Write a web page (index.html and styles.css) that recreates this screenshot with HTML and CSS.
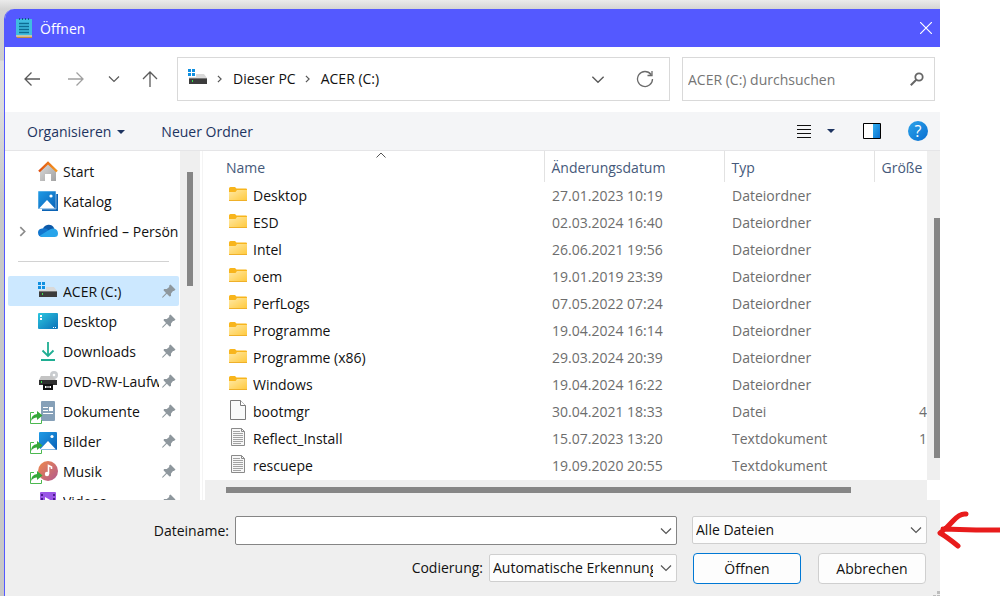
FILE: index.html
```
<!DOCTYPE html>
<html lang="de">
<head>
    <meta charset="UTF-8">
    <meta name="viewport" content="width=device-width, initial-scale=1.0">
    <title>Öffnen</title>
    <link rel="stylesheet" href="styles.css">
</head>
<body>
    <svg class="symbols" width="0" height="0" aria-hidden="true">
        <defs>
            <linearGradient id="folderFill" x1="0" y1="0" x2="1" y2="1">
                <stop offset="0" stop-color="#ffe9a6"/><stop offset="1" stop-color="#ffc93c"/>
            </linearGradient>
            <linearGradient id="blueFill" x1="0" y1="0" x2="1" y2="1">
                <stop offset="0" stop-color="#1f9be6"/><stop offset="1" stop-color="#0a62b8"/>
            </linearGradient>
            <linearGradient id="paneFill" x1="0" y1="0" x2="1" y2="1">
                <stop offset="0" stop-color="#32b0f0"/><stop offset="1" stop-color="#0a6fd0"/>
            </linearGradient>
            <linearGradient id="deskFill" x1="0" y1="0" x2="1" y2="1">
                <stop offset="0" stop-color="#2cc6df"/><stop offset="1" stop-color="#0b70b8"/>
            </linearGradient>
            <linearGradient id="musicFill" x1="0" y1="0" x2="1" y2="1">
                <stop offset="0" stop-color="#f08a4b"/><stop offset="1" stop-color="#b0588f"/>
            </linearGradient>
            <linearGradient id="roofFill" x1="0" y1="0" x2="1" y2="0">
                <stop offset="0" stop-color="#e04e0e"/><stop offset="1" stop-color="#f59a23"/>
            </linearGradient>
            <linearGradient id="wallFill" x1="0" y1="0" x2="1" y2="1">
                <stop offset="0" stop-color="#dcdcdc"/><stop offset="1" stop-color="#a2a2a2"/>
            </linearGradient>
        </defs>
        <symbol id="drive" viewBox="0 0 20 20">
            <path d="M0 1h3v3H0zM4 1h3v3H4zM0 5h3v3H0zM4 5h3v3H4z" fill="#0f8fe0"/>
            <path d="M8 6h8l3 4H1V9h7z" fill="#d9d9d9"/>
            <path d="M1 10h18v6H1z" fill="#3c3c3c"/>
            <path d="M1 10h18v1H1z" fill="#777"/>
            <path d="M4 12h1v2H4z" fill="#38e04a"/>
        </symbol>
        <symbol id="folder" viewBox="0 0 18 14">
            <path d="M0 1.500Q0 0 1.500 0H6l1.500 1.500H17q1 0 1 1V5H0z" fill="#f8b51c"/>
            <path d="M0 5h6.500L8 3h10v10.500H0z" fill="url(#folderFill)"/>
            <path d="M0 13h18v1H0z" fill="#efb029"/>
        </symbol>
        <symbol id="file" viewBox="0 0 18 20">
            <path d="M1.500.5h10l5 5v14h-15z" fill="#f9fafa" stroke="#7a7a7a"/>
            <path d="M11.500.5v5h5" fill="#fff" stroke="#7a7a7a"/>
        </symbol>
        <symbol id="text" viewBox="0 0 18 20">
            <path d="M2.500 1.500h10l3 3v14h-13z" fill="#f7f7f7" stroke="#8a8a8a"/>
            <path d="M12.500 1.500v3h3" fill="none" stroke="#8a8a8a"/>
            <path d="M4 4.500h7M4 6.500h10M4 8.500h10M4 10.500h10M4 12.500h10M4 14.500h10M4 16.500h8" stroke="#a2a2a2" fill="none"/>
        </symbol>
        <symbol id="pin" viewBox="0 0 14 14">
            <path d="M8.500 0.500L13.500 5.500L12 7L11 7L9 9.500L9 12L7.500 12.500L4.800 9.800L1 13.500L0 13.800L0.500 12.500L4 9L1.500 6.300L2 5L4.800 5L7.200 3L7.200 1.500z" fill="#8e979d"/>
        </symbol>
        <symbol id="share" viewBox="0 0 14 14">
            <path d="M5 2.500H1.500v11h11V10" fill="#fff" stroke="#4cb850"/>
            <path d="M2 11Q2 5 8 4V1l5.500 4.500L8 10V7.500Q4 7.500 2 11z" fill="#35a83a"/>
        </symbol>
        <symbol id="down" viewBox="0 0 12 8">
            <path d="M1 1.500l5 5 5-5" fill="none" stroke="currentColor" stroke-width="1.200"/>
        </symbol>
        <symbol id="right" viewBox="0 0 6 10">
            <path d="M1 1l4 4-4 4" fill="none" stroke="currentColor" stroke-width="1.500"/>
        </symbol>
    </svg>

    <div class="desktop">
        <div class="dialog">
            <header class="titlebar">
                <svg class="app-icon" width="16" height="20" viewBox="0 0 16 20" aria-hidden="true">
                    <path d="M0 17h16v3H1z" fill="#c58b3f"/>
                    <path d="M0 1h16v16.500H0z" fill="#40bde0"/>
                    <path d="M0 17.500h16v1H0z" fill="#f1e9dc"/>
                    <path d="M3 5.500h10M3 8.500h10M3 11.500h10M3 14.500h10" stroke="#0d6d94" stroke-width="1.500"/>
                    <path d="M3.500 0v2M6.500 0v2M9.500 0v2M12.500 0v2" stroke="#0d5d86"/>
                </svg>
                <h1>Öffnen</h1>
                <button class="close" type="button" aria-label="Schließen">
                    <svg width="12" height="12" viewBox="0 0 12 12"><path d="M0 0l12 12M12 0L0 12" stroke="#fff" stroke-width="1.200"/></svg>
                </button>
            </header>

            <div class="navbar">
                <button class="nav" type="button" aria-label="Zurück">
                    <svg width="16" height="16" viewBox="0 0 16 16"><path d="M16 8H1M7.500 1.500L1 8l6.500 6.500" fill="none" stroke="#5a5a5a" stroke-width="1.300"/></svg>
                </button>
                <button class="nav" type="button" aria-label="Vorwärts">
                    <svg width="16" height="16" viewBox="0 0 16 16"><path d="M0 8h15M8.500 1.500L15 8l-6.500 6.500" fill="none" stroke="#a0a0a0" stroke-width="1.300"/></svg>
                </button>
                <button class="nav narrow" type="button" aria-label="Zuletzt besucht">
                    <svg width="12" height="8"><use href="#down"/></svg>
                </button>
                <button class="nav" type="button" aria-label="Nach oben">
                    <svg width="16" height="16" viewBox="0 0 16 16"><path d="M8 16V1M1 8l7-7 7 7" fill="none" stroke="#5a5a5a" stroke-width="1.300"/></svg>
                </button>
                <div class="address">
                    <svg class="address-icon" width="20" height="20"><use href="#drive"/></svg>
                    <svg class="crumb-arrow" width="5" height="8"><use href="#right"/></svg>
                    <a href="#">Dieser PC</a>
                    <svg class="crumb-arrow" width="5" height="8"><use href="#right"/></svg>
                    <a href="#">ACER (C:)</a>
                    <button class="address-btn first" type="button" aria-label="Vorherige Orte">
                        <svg width="14" height="9"><use href="#down"/></svg>
                    </button>
                    <button class="address-btn" type="button" aria-label="Aktualisieren">
                        <svg width="18" height="18" viewBox="0 0 18 18"><path d="M15 4.500A7.500 7.500 0 1 0 16.500 9M16 1v4.500h-4.500" fill="none" stroke="#6a6a6a" stroke-width="1.300"/></svg>
                    </button>
                </div>
                <div class="search">
                    <input type="text" placeholder="ACER (C:) durchsuchen" aria-label="ACER (C:) durchsuchen">
                    <svg width="14" height="14" viewBox="0 0 14 14" aria-hidden="true"><circle cx="9" cy="5" r="3.700" fill="none" stroke="#666" stroke-width="1.800"/><path d="M6.300 7.700L.8 13.200" stroke="#666" stroke-width="2"/></svg>
                </div>
            </div>

            <div class="commands">
                <button class="command" type="button">Organisieren
                    <svg width="8" height="4" viewBox="0 0 8 4"><path d="M0 0h8L4 4z" fill="#1d3461"/></svg>
                </button>
                <button class="command" type="button">Neuer Ordner</button>
                <div class="view-tools">
                    <button type="button" aria-label="Ansicht ändern">
                        <svg width="14" height="14" viewBox="0 0 14 14"><path d="M0 1.500h14M0 5.500h14M0 9.500h14M0 13.500h14" stroke="#111"/></svg>
                    </button>
                    <button class="view-menu" type="button" aria-label="Weitere Optionen">
                        <svg width="8" height="4" viewBox="0 0 8 4"><path d="M0 0h8L4 4z" fill="#1d3461"/></svg>
                    </button>
                    <button class="preview" type="button" aria-label="Vorschaufenster">
                        <svg width="18" height="16" viewBox="0 0 18 16"><path d="M.5.500h17v15H.5z" fill="#fff" stroke="#000"/><path d="M10 1h7v14h-7z" fill="url(#paneFill)"/></svg>
                    </button>
                    <button class="help" type="button" aria-label="Hilfe">?</button>
                </div>
            </div>

            <div class="content">
                <nav class="sidebar">
                    <ul>
                        <li><a href="#">
                            <span class="place-icon"><svg width="20" height="20" viewBox="0 0 20 20">
                                <path d="M2 9l8-7 8 7v11h-5v-7H7v7H2z" fill="url(#wallFill)"/>
                                <path d="M1 10.500L10 2l9 8.500" fill="none" stroke="url(#roofFill)" stroke-width="2.400"/>
                            </svg></span>
                            <span class="place">Start</span></a></li>
                        <li><a href="#">
                            <span class="place-icon"><svg width="20" height="20" viewBox="0 0 20 20">
                                <path d="M4 3h16v17H4z" fill="#0b63b5"/>
                                <path d="M0 0h18v18H0z" fill="url(#blueFill)" stroke="#fff" stroke-width=".5"/>
                                <path d="M1 17.500L9 9l8 8.500z" fill="#fff"/><circle cx="13" cy="5" r="1.600" fill="#fff"/>
                            </svg></span>
                            <span class="place">Katalog</span></a></li>
                        <li><a href="#">
                            <svg class="expand" width="7" height="11"><use href="#right"/></svg>
                            <span class="place-icon"><svg width="20" height="20" viewBox="0 0 20 20">
                                <path d="M5 8a6 6 0 0 1 11-1l1 4-12 1z" fill="#0c59a8"/>
                                <path d="M4 7.500q4-1 7 2L5 16q-5 0-5-4.500Q0 8 4 7.500z" fill="#1276ce"/>
                                <path d="M2 14.500L11 9q2-2 5-1.500 4 1 4 5Q20 16 16.500 16H5q-2 0-3-1.500z" fill="#28a4ea"/>
                            </svg></span>
                            <span class="place">Winfried – Persön</span></a></li>
                    </ul>
                    <hr>
                    <ul>
                        <li><a class="active" href="#">
                            <span class="place-icon"><svg width="20" height="20"><use href="#drive"/></svg></span>
                            <span class="place">ACER (C:)</span><svg class="pin" width="14" height="14"><use href="#pin"/></svg></a></li>
                        <li><a href="#">
                            <span class="place-icon"><svg width="20" height="20" viewBox="0 0 20 20">
                                <rect y="2" width="20" height="16" rx="1" fill="url(#deskFill)"/>
                                <path d="M2 4h2v2H2zM2 7h2v2H2zM15 16h1v1h-1zM17 16h1v1h-1z" fill="#fff"/>
                            </svg></span>
                            <span class="place">Desktop</span><svg class="pin" width="14" height="14"><use href="#pin"/></svg></a></li>
                        <li><a href="#">
                            <span class="place-icon"><svg width="20" height="20" viewBox="0 0 20 20">
                                <path d="M10 1v14M4.500 9.500L10 15l5.500-5.500M3 19h14" fill="none" stroke="#1fae92" stroke-width="1.800"/>
                            </svg></span>
                            <span class="place">Downloads</span><svg class="pin" width="14" height="14"><use href="#pin"/></svg></a></li>
                        <li><a href="#">
                            <span class="place-icon"><svg width="20" height="20" viewBox="0 0 20 20">
                                <circle cx="16" cy="4" r="4" fill="#c9cccf"/><circle cx="16" cy="4" r="1.300" fill="#fff"/>
                                <path d="M3 5h11l4 4H1z" fill="#c4c4c4"/><path d="M1 9h18v5H1z" fill="#303030"/>
                                <path d="M3 10h1v2H3z" fill="#3be04c"/><path d="M5 13h10v6H5z" fill="#111"/>
                                <path d="M7 15h6v2H7z" fill="#fff"/><path d="M8 16h4" stroke="#222"/>
                            </svg></span>
                            <span class="place">DVD-RW-Laufwerk</span><svg class="pin" width="14" height="14"><use href="#pin"/></svg></a></li>
                        <li><a href="#">
                            <span class="place-icon"><svg width="20" height="20" viewBox="0 0 20 20">
                                <rect x="3" width="14" height="20" rx="1" fill="#86a0b8"/>
                                <path d="M5 6.500h5M5 9.500h5M5 12.500h10" stroke="#fff"/><path d="M11 6h4v4h-4z" fill="#fff"/>
                            </svg><svg class="badge" width="14" height="14"><use href="#share"/></svg></span>
                            <span class="place">Dokumente</span><svg class="pin" width="14" height="14"><use href="#pin"/></svg></a></li>
                        <li><a href="#">
                            <span class="place-icon"><svg width="20" height="20" viewBox="0 0 20 20">
                                <rect x="1" y="1" width="18" height="18" rx="1" fill="url(#blueFill)"/>
                                <path d="M2 18.500L10 10l8 8.500z" fill="#fff"/><circle cx="14" cy="5.500" r="1.600" fill="#fff"/>
                            </svg><svg class="badge" width="14" height="14"><use href="#share"/></svg></span>
                            <span class="place">Bilder</span><svg class="pin" width="14" height="14"><use href="#pin"/></svg></a></li>
                        <li><a href="#">
                            <span class="place-icon"><svg width="20" height="20" viewBox="0 0 20 20">
                                <circle cx="10" cy="10" r="10" fill="url(#musicFill)"/>
                                <path d="M10.500 13V4.500l3 1.500v2" fill="none" stroke="#fff" stroke-width="1.600"/><circle cx="9" cy="13" r="2.200" fill="#fff"/>
                            </svg><svg class="badge" width="14" height="14"><use href="#share"/></svg></span>
                            <span class="place">Musik</span><svg class="pin" width="14" height="14"><use href="#pin"/></svg></a></li>
                        <li><a href="#">
                            <span class="place-icon"><svg width="20" height="20" viewBox="0 0 20 20">
                                <rect x="2" y="1" width="16" height="18" rx="1" fill="#9a55e6"/>
                                <path d="M3 3h2v2H3zM3 7h2v2H3zM15 3h2v2h-2zM15 7h2v2h-2z" fill="#4b1d8e"/>
                                <path d="M7 6l7 4-7 4z" fill="#fff"/>
                            </svg></span>
                            <span class="place">Videos</span><svg class="pin" width="14" height="14"><use href="#pin"/></svg></a></li>
                    </ul>
                </nav>
                <div class="scroll-side"><div class="thumb"></div></div>

                <div class="files">
                    <div class="list">
                        <table>
                            <colgroup><col><col class="col-date"><col class="col-type"><col class="col-size"></colgroup>
                            <thead>
                                <tr>
                                    <th>Name <svg class="sort" width="10" height="6" viewBox="0 0 10 6"><path d="M.5 5.500L5 1l4.500 4.500" fill="none" stroke="#555"/></svg></th>
                                    <th>Änderungsdatum</th><th>Typ</th><th>Größe</th>
                                </tr>
                            </thead>
                            <tbody>
                                <tr><td><svg width="18" height="14"><use href="#folder"/></svg>Desktop</td><td>27.01.2023 10:19</td><td>Dateiordner</td><td></td></tr>
                                <tr><td><svg width="18" height="14"><use href="#folder"/></svg>ESD</td><td>02.03.2024 16:40</td><td>Dateiordner</td><td></td></tr>
                                <tr><td><svg width="18" height="14"><use href="#folder"/></svg>Intel</td><td>26.06.2021 19:56</td><td>Dateiordner</td><td></td></tr>
                                <tr><td><svg width="18" height="14"><use href="#folder"/></svg>oem</td><td>19.01.2019 23:39</td><td>Dateiordner</td><td></td></tr>
                                <tr><td><svg width="18" height="14"><use href="#folder"/></svg>PerfLogs</td><td>07.05.2022 07:24</td><td>Dateiordner</td><td></td></tr>
                                <tr><td><svg width="18" height="14"><use href="#folder"/></svg>Programme</td><td>19.04.2024 16:14</td><td>Dateiordner</td><td></td></tr>
                                <tr><td><svg width="18" height="14"><use href="#folder"/></svg>Programme (x86)</td><td>29.03.2024 20:39</td><td>Dateiordner</td><td></td></tr>
                                <tr><td><svg width="18" height="14"><use href="#folder"/></svg>Windows</td><td>19.04.2024 16:22</td><td>Dateiordner</td><td></td></tr>
                                <tr><td><svg width="18" height="20"><use href="#file"/></svg>bootmgr</td><td>30.04.2021 18:33</td><td>Datei</td><td>4</td></tr>
                                <tr><td><svg width="18" height="20"><use href="#text"/></svg>Reflect_Install</td><td>15.07.2023 13:20</td><td>Textdokument</td><td>1</td></tr>
                                <tr><td><svg width="18" height="20"><use href="#text"/></svg>rescuepe</td><td>19.09.2020 20:55</td><td>Textdokument</td><td></td></tr>
                            </tbody>
                        </table>
                    </div>
                    <div class="scroll-y"><div class="thumb"></div></div>
                    <div class="scroll-x"><div class="thumb"></div></div>
                </div>
            </div>

            <form class="footer">
                <label class="name-label" for="filename">Dateiname:</label>
                <div class="combo">
                    <input id="filename" type="text">
                    <button type="button" aria-label="Zuletzt verwendet"><svg width="12" height="8"><use href="#down"/></svg></button>
                </div>
                <div class="select">
                    <select aria-label="Dateityp"><option>Alle Dateien</option></select>
                    <svg width="12" height="8"><use href="#down"/></svg>
                </div>
                <div class="encoding">
                    <label for="encoding">Codierung:</label>
                    <div class="select">
                        <select id="encoding"><option>Automatische Erkennung</option></select>
                        <svg width="12" height="8"><use href="#down"/></svg>
                    </div>
                </div>
                <div class="buttons">
                    <button class="btn primary" type="button">Öffnen</button>
                    <button class="btn" type="button">Abbrechen</button>
                </div>
                <svg class="grip" width="7" height="5" viewBox="0 0 7 5" aria-hidden="true"><path d="M4 0h3v3H4zM0 4h3v1H0zM4 4h3v1H4z" fill="#bdbdbd"/></svg>
            </form>
        </div>
    </div>

    <svg class="arrow" width="64" height="42" viewBox="0 0 64 42" aria-hidden="true">
        <path d="M64 20L40 20L7 19M30 4Q24 3 17 11Q11 18 4 23Q11 27 22 36" fill="none" stroke="#e81c1c" stroke-width="5" stroke-linecap="round" stroke-linejoin="round"/>
    </svg>
</body>
</html>
```
FILE: styles.css
```
* {
    box-sizing: border-box;
}

body {
    margin: 0;
    background-color: #fff;
    color: #111;
    font-family: "Open Sans", "Noto Sans", sans-serif;
    font-size: 14px;
    line-height: 20px;
    overflow: hidden;
}

h1, ul {
    margin: 0;
    padding: 0;
    list-style: none;
}

a {
    color: inherit;
    text-decoration: none;
}

svg {
    display: block;
    flex: none;
}

button, input, select {
    margin: 0;
    padding: 0;
    border: 0;
    background: none;
    color: inherit;
    font: inherit;
}

.symbols {
    position: absolute;
}

.desktop {
    min-height: 100vh;
    margin-right: 60px;
    padding: 9px 0 0 4px;
    display: flex;
    background: linear-gradient(#ebebeb, #d4d4d4 9px, #cdcdcd 60px, #dedede 61px, #dcdcdc 110px, #c8c8c8 200px);
}

.dialog {
    flex: 1;
    min-width: 0;
    display: flex;
    flex-direction: column;
    border-left: 1px solid #5459ff;
    border-top-left-radius: 10px;
    background-color: #efefef;
    overflow: hidden;
}

.titlebar {
    height: 38px;
    padding: 0 8px 0 11px;
    display: flex;
    align-items: center;
    gap: 8px;
    background-color: #5459ff;
    color: #fff;
}

    .titlebar h1 {
        flex: 1;
        padding-top: 2px;
        font-size: 14px;
        font-weight: normal;
    }

.close {
    height: 12px;
}

/* navigation row */
.navbar {
    height: 65px;
    padding: 10px 5px 11px 10px;
    display: flex;
    align-items: stretch;
    background-color: #fff;
    color: #5a5a5a;
}

.nav {
    width: 44px;
    padding-left: 9px;
}

    .nav.narrow {
        width: 30px;
        padding-left: 5px;
    }

.address {
    flex: 1;
    min-width: 0;
    padding: 0 15px 0 10px;
    display: flex;
    align-items: center;
    border: 1px solid #d9d9d9;
}

    .address a {
        color: #111;
        white-space: nowrap;
    }

.address-icon {
    margin-bottom: 2px;
}

.crumb-arrow {
    margin: 0 11px 0 9px;
}

.address-btn.first {
    margin-left: auto;
    margin-right: 31px;
}

.search {
    width: 253px;
    margin-left: 12px;
    padding: 0 10px 0 5px;
    display: flex;
    align-items: center;
    border: 1px solid #d9d9d9;
}

    .search input {
        flex: 1;
        min-width: 0;
        padding-top: 2px;
    }

    .search input::placeholder {
        color: #757575;
    }

/* command bar */
.commands {
    height: 39px;
    padding: 0 12px 0 22px;
    display: flex;
    align-items: center;
    background-color: #f4f5f7;
    border-bottom: 1px solid #e5e5e7;
    color: #1d3461;
}

.command {
    margin-right: 36px;
    padding-top: 2px;
    display: flex;
    align-items: center;
    gap: 6px;
}

.view-tools {
    margin-left: auto;
    display: flex;
    align-items: center;
}

.view-menu {
    margin: 0 28px 0 16px;
}

.help {
    width: 20px;
    height: 20px;
    margin-left: 27px;
    border-radius: 50%;
    background: linear-gradient(135deg, #2ba3ea, #0a6ed0);
    color: #fff;
    font-size: 16px;
    text-align: center;
}

.content {
    height: 349px;
    display: flex;
    background-color: #fff;
}

.sidebar {
    width: 175px;
    padding: 5px 1px 0 3px;
    overflow: hidden;
}

    .sidebar a {
        height: 30px;
        padding: 0 3px 0 30px;
        display: flex;
        align-items: center;
        position: relative;
        border-radius: 2px;
    }

    .sidebar ul:first-child a {
        padding-right: 0;
    }

    .sidebar a.active {
        background-color: #cce8ff;
    }

    .sidebar hr {
        margin: 15px 10px 14px;
        border: 0;
        border-top: 1px solid #d2d2d2;
    }

.place-icon {
    flex: none;
    position: relative;
    margin-right: 5px;
}

.place {
    flex: 1;
    padding-top: 2px;
    overflow: hidden;
    white-space: nowrap;
}

.pin {
    margin-left: 3px;
}

.expand {
    position: absolute;
    left: 11px;
    color: #8a8a8a;
}

.badge {
    position: absolute;
    left: -9px;
    bottom: -3px;
}

.scroll-side {
    width: 20px;
    padding: 21px 7px 0;
    background-color: #efefef;
}

.thumb {
    background-color: #868686;
}

.scroll-side .thumb {
    height: 114px;
}

/* file list */
.files {
    flex: 1;
    min-width: 0;
    margin-left: 2px;
    padding-left: 2px;
    display: grid;
    grid-template-columns: 1fr 13px;
    grid-template-rows: 1fr 20px;
    border-left: 1px solid #f4f4f4;
}

.list {
    padding-left: 14px;
    overflow: hidden;
}

table {
    width: 100%;
    border-collapse: collapse;
    table-layout: fixed;
    white-space: nowrap;
}

.col-date {
    width: 180px;
}

.col-type {
    width: 150px;
}

.col-size {
    width: 53px;
}

th {
    height: 31px;
    padding: 2px 0 0 7px;
    position: relative;
    border-left: 1px solid #e2e2e2;
    color: #45597a;
    font-weight: normal;
    text-align: left;
}

    th:first-child {
        border-left: 0;
    }

.sort {
    position: absolute;
    top: 1px;
    left: 50%;
    margin-left: -5px;
}

td {
    height: 27px;
    padding: 0 0 0 8px;
    color: #6d6d6d;
}

    td:first-child {
        padding-left: 10px;
        color: #111;
    }

    td:last-child {
        padding: 0;
        text-align: right;
    }

    td svg {
        display: inline-block;
        vertical-align: middle;
        margin: -6px 6px 0 0;
    }

.scroll-y {
    padding: 67px 0 0 7px;
    background-color: #efefef;
}

    .scroll-y .thumb {
        height: 240px;
    }

.scroll-x {
    padding: 7px 76px 7px 21px;
    background-color: #efefef;
}

    .scroll-x .thumb {
        height: 6px;
    }

/* file name, type and buttons */
.footer {
    flex: 1;
    padding: 16px 13px 12px 0;
    display: grid;
    grid-template-columns: 224px 1fr 235px;
    grid-auto-rows: min-content;
    row-gap: 8px;
    align-items: start;
    position: relative;
}

.name-label {
    padding-top: 5px;
    text-align: right;
}

.combo {
    height: 29px;
    margin: 0 15px 0 6px;
    padding-right: 4px;
    display: flex;
    align-items: center;
    border: 1px solid #858585;
    border-radius: 2px;
    background-color: #fff;
}

    .combo input {
        flex: 1;
        min-width: 0;
        padding-left: 4px;
    }

.select {
    position: relative;
}

    .select select {
        display: block;
        width: 100%;
        height: 28px;
        padding: 0 23px 0 3px;
        appearance: none;
        border: 1px solid #cfcfcf;
        border-radius: 2px;
        background-color: #fdfdfd;
        color: #111;
    }

    .select svg {
        position: absolute;
        top: 10px;
        right: 5px;
    }

.combo svg, .select svg {
    color: #555;
}

.encoding {
    grid-column: 1 / 3;
    margin-right: 15px;
    padding-top: 1px;
    display: flex;
    justify-content: flex-end;
    align-items: center;
    gap: 6px;
}

    .encoding .select {
        width: 188px;
    }

.buttons {
    padding: 0 1px;
    display: flex;
    justify-content: space-between;
}

.btn {
    width: 108px;
    height: 31px;
    border: 1px solid #cfcfcf;
    border-radius: 4px;
    background-color: #fdfdfd;
}

    .btn.primary {
        border-color: #0078d4;
    }

.grip {
    position: absolute;
    right: 0;
    bottom: 0;
}

.arrow {
    position: absolute;
    top: 510px;
    right: 0;
}
```
